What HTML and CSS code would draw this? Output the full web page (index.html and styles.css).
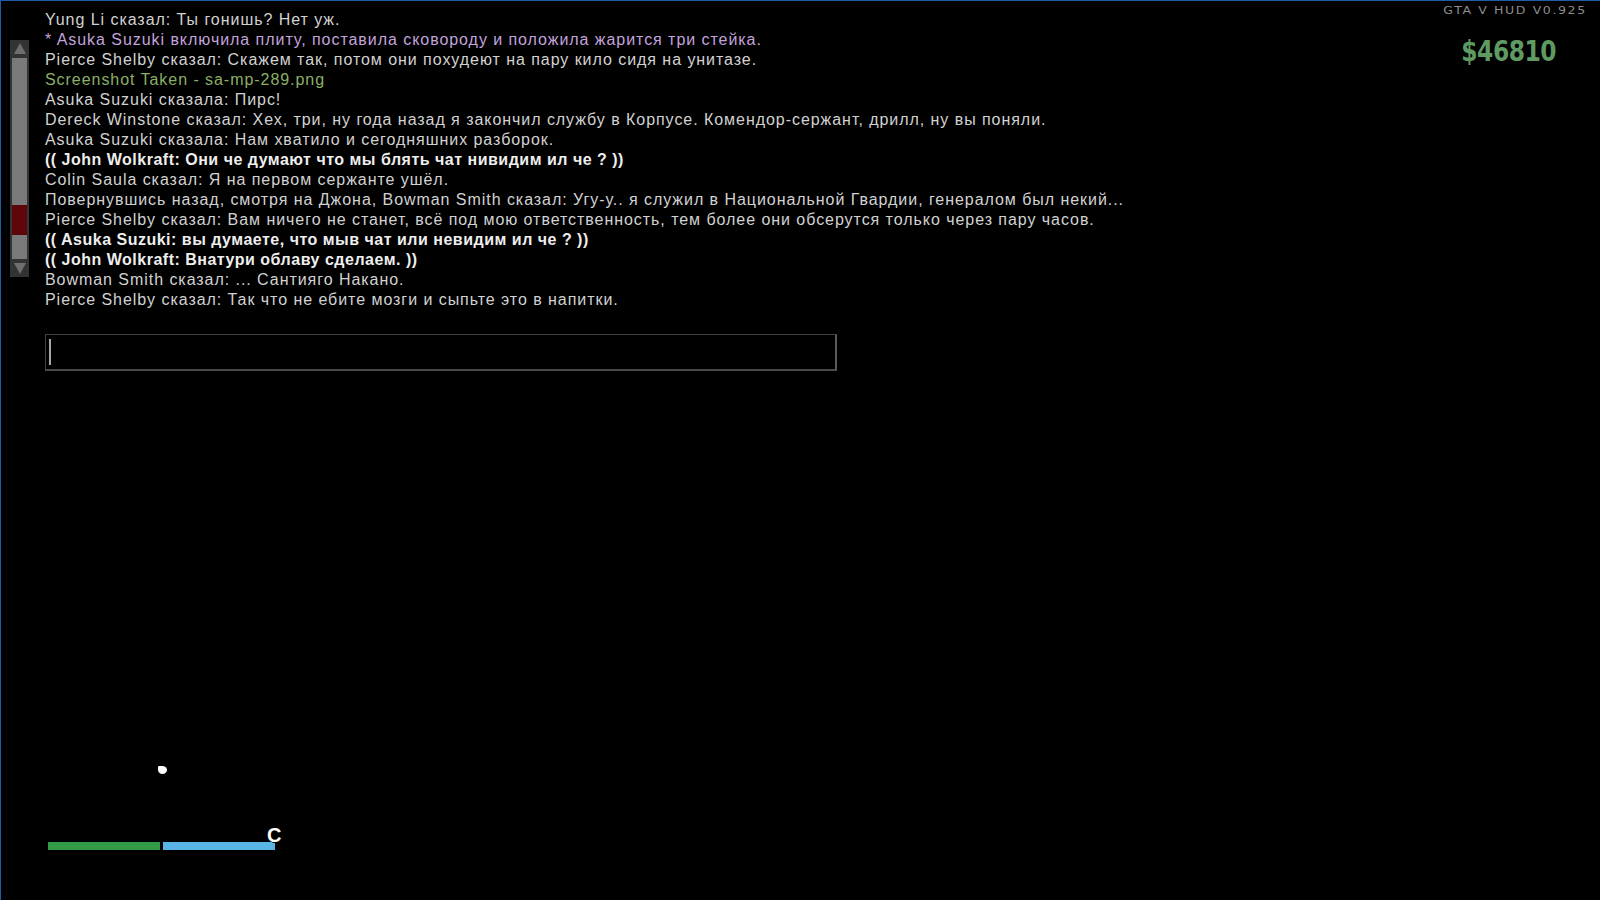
FILE: index.html
```html
<!DOCTYPE html>
<html>
<head>
    <title>SA-MP</title>
    <link rel="stylesheet" href="styles.css">
</head>
<body>
    <div id="screen">
        <div id="chat">
            <div id="scrollBar">
                <div class="arrow up"></div>
                <div id="track">
                    <div id="thumb"></div>
                </div>
                <div class="arrow down"></div>
            </div>
            <div id="chatBody">
                <div id="log">
                    <p class="line">Yung Li сказал: Ты гонишь? Нет уж.</p>
                    <p class="line me">* Asuka Suzuki включила плиту, поставила сковороду и положила жарится три стейка.</p>
                    <p class="line">Pierce Shelby сказал: Скажем так, потом они похудеют на пару кило сидя на унитазе.</p>
                    <p class="line info">Screenshot Taken - sa-mp-289.png</p>
                    <p class="line">Asuka Suzuki сказала: Пирс!</p>
                    <p class="line">Dereck Winstone сказал: Хех, три, ну года назад я закончил службу в Корпусе. Комендор-сержант, дрилл, ну вы поняли.</p>
                    <p class="line">Asuka Suzuki сказала: Нам хватило и сегодняшних разборок.</p>
                    <p class="line ooc">(( John Wolkraft: Они че думают что мы блять чат нивидим ил че ? ))</p>
                    <p class="line">Colin Saula сказал: Я на первом сержанте ушёл.</p>
                    <p class="line">Повернувшись назад, смотря на Джона, Bowman Smith сказал: Угу-у.. я служил в Национальной Гвардии, генералом был некий...</p>
                    <p class="line">Pierce Shelby сказал: Вам ничего не станет, всё под мою ответственность, тем более они обсерутся только через пару часов.</p>
                    <p class="line ooc">(( Asuka Suzuki: вы думаете, что мыв чат или невидим ил че ? ))</p>
                    <p class="line ooc">(( John Wolkraft: Внатури облаву сделаем. ))</p>
                    <p class="line">Bowman Smith сказал: ... Сантияго Накано.</p>
                    <p class="line">Pierce Shelby сказал: Так что не ебите мозги и сыпьте это в напитки.</p>
                </div>
                <div id="chatInput"><span id="caret"></span></div>
            </div>
        </div>
        <div id="hud">
            <div id="version">GTA V HUD V0.925</div>
            <div id="money">$46810</div>
        </div>
        <div id="radar">
            <div id="blip"></div>
            <div id="bars">
                <div class="bar health"></div>
                <div class="bar armour"></div>
                <span id="compass">C</span>
            </div>
        </div>
    </div>
</body>
</html>
```

FILE: styles.css
```css
body{
    margin: 0px;
    background-color: #000000;
}

#screen{
    position: relative;
    display: flex;
    justify-content: space-between;
    height: 899px;
    width: 1599px;
    border-top: 1px solid #1f5ca8;
    border-left: 1px solid #1f5ca8;
    overflow: hidden;
}

#chat{
    display: flex;
    flex-direction: row;
    align-items: flex-start;
    padding-left: 9px;
}

#scrollBar{
    display: flex;
    flex-direction: column;
    width: 19px;
    height: 237px;
    margin-top: 39px;
    background-color: #333333;
    box-sizing: border-box;
    padding: 0px 2px;
}

.arrow{
    height: 17px;
    display: flex;
    justify-content: center;
    align-items: center;
}

.arrow.up::before{
    content: "";
    border-left: 6px solid transparent;
    border-right: 6px solid transparent;
    border-bottom: 11px solid #6e6e6e;
}

.arrow.down::before{
    content: "";
    border-left: 6px solid transparent;
    border-right: 6px solid transparent;
    border-top: 11px solid #6e6e6e;
}

#track{
    flex: 1;
    background-color: #7a7a7a;
    padding-top: 147px;
    margin: 1px 0px;
}

#thumb{
    height: 30px;
    background-color: #5e0609;
}

#chatBody{
    padding-left: 16px;
    padding-top: 9px;
}

.line{
    margin: 0px;
    font-family: "Liberation Sans", Arial, sans-serif;
    font-size: 16px;
    line-height: 20px;
    letter-spacing: 0.95px;
    color: #d2d2d2;
    white-space: nowrap;
    text-shadow: 1px 1px 0px #000;
}

.me{
    color: #c3a3dc;
}

.info{
    color: #8caf66;
}

.ooc{
    color: #eeeeee;
    font-weight: bold;
    letter-spacing: 0.5px;
}

#chatInput{
    margin-top: 24px;
    width: 792px;
    height: 37px;
    border: 1px solid #404040;
    border-right: 2px solid #5a5a5a;
    border-bottom: 2px solid #4a4a4a;
    box-sizing: border-box;
    padding: 4px 0px 0px 3px;
}

#caret{
    display: block;
    width: 2px;
    height: 26px;
    background-color: #a8a8a8;
}

#hud{
    display: flex;
    flex-direction: column;
    align-items: flex-end;
    padding-right: 13px;
    padding-top: 4px;
}

#version{
    font-family: "DejaVu Sans", sans-serif;
    font-size: 10px;
    letter-spacing: 1.3px;
    transform: scaleX(1.25);
    transform-origin: right;
    color: #8c8c8c;
    line-height: 12px;
}

#money{
    margin-top: 21px;
    margin-right: 31px;
    font-family: "DejaVu Sans Condensed", "DejaVu Sans", sans-serif;
    font-weight: bold;
    font-size: 26px;
    line-height: 26px;
    color: #5f9a63;
    letter-spacing: -0.5px;
    transform: scaleY(1.1);
}

#radar{
    position: absolute;
    left: 47px;
    top: 765px;
    width: 240px;
}

#blip{
    margin-left: 110px;
    width: 9px;
    height: 8px;
    background-color: #ffffff;
    border-radius: 1px 50% 50% 50%;
}

#bars{
    position: relative;
    display: flex;
    flex-direction: row;
    gap: 3px;
    margin-top: 68px;
}

.bar{
    width: 112px;
    height: 8px;
}

.health{
    background-color: #339a48;
}

.armour{
    background-color: #5ab5e7;
}

#compass{
    position: absolute;
    left: 219px;
    top: -17px;
    font-family: "Liberation Sans", Arial, sans-serif;
    font-weight: bold;
    font-size: 20px;
    line-height: 20px;
    color: #ffffff;
    text-shadow: 1px 1px 0px #000, -1px 0px 0px #000;
}
```
